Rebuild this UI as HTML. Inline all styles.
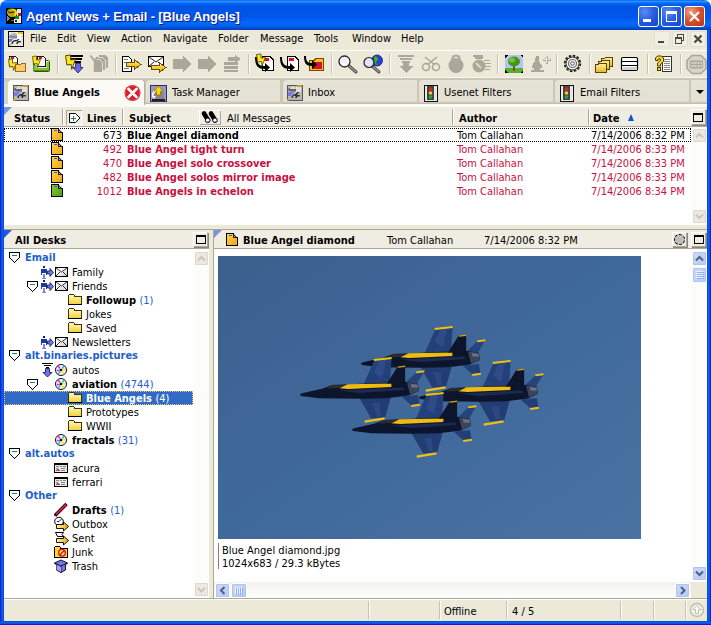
<!DOCTYPE html>
<html><head><meta charset="utf-8"><title>Agent News + Email - [Blue Angels]</title>
<style>
html,body{margin:0;padding:0;background:#fff}
body{width:711px;height:625px;position:relative;overflow:hidden;font:11px "DejaVu Sans Condensed","Liberation Sans",sans-serif;color:#000}
.a{position:absolute}
.t{position:absolute;white-space:pre;line-height:14px;height:14px}
.b{font-weight:bold}
#win{left:0;top:0;width:711px;height:625px;background:#ece9d8;border-radius:7px 7px 0 0;overflow:hidden}
#title{left:0;top:0;width:711px;height:30px;background:linear-gradient(to bottom,#0058ee 0%,#3593ff 4%,#288eff 6%,#127dff 8%,#036ffc 10%,#0262ee 14%,#0057e5 20%,#0054e3 24%,#0055eb 56%,#005bf5 66%,#026afe 76%,#0062ef 86%,#0052d6 92%,#0046c8 96%,#003cbc 100%)}
#title .tt{left:26px;top:9px;font:bold 13px "Liberation Sans",sans-serif;color:#fff;text-shadow:1px 1px 0 #0a1883;line-height:16px;height:16px;letter-spacing:-0.15px}
.bl{background:linear-gradient(to right,#0019cf 0,#0831d9 1px,#166aee 2px,#0855dd 3px,#0048d8 4px)}
.wb{top:6px;width:21px;height:21px;border-radius:3px;box-sizing:border-box;border:1px solid #fff;background:radial-gradient(circle at 30% 25%,#5b8df5 0,#2b5fe3 45%,#1843c4 100%)}
.wb.cl{background:radial-gradient(circle at 30% 25%,#f0a58b 0,#d8532f 45%,#b83212 100%)}
.hdr{background:#ece9d8}
.sep{width:1px;background:#aca899;box-shadow:1px 0 0 #fff}
.tab{top:80px;height:24px;width:134px;background:linear-gradient(to bottom,#e6e3d7 0,#e4e1d4 21px,#c9c5b4 23px,#b9b5a4 24px);border-radius:4px 0 0 0}
.tab.act{top:80px;height:25px;width:136px;background:#fbfaf4;border-radius:4px 3px 0 0;box-shadow:1px 0 0 #b5b1a0}
.red{color:#c8103e}
.blue{color:#2460c8}
.sb{background:#fcfcfa}
.sbtn{width:15px;height:15px;border-radius:2px;box-sizing:border-box;border:1px solid #fff;background:linear-gradient(135deg,#cbd9fb,#b7c9f5);box-shadow:0 0 0 1px #b3c3ee inset}
.sbtn.dis{background:#ece9e2;box-shadow:0 0 0 1px #dcd8cf inset}
.mx{width:10px;height:9px;box-sizing:border-box;border:1px solid #000;border-top-width:2px}
.rb{width:16px;height:15px;box-sizing:border-box;border:1px solid;border-color:#fff #aca899 #aca899 #fff;box-shadow:1px 1px 0 #8a887a;background:#efede2}
.tri{width:0;height:0;border-top:8px solid #7895e2;border-right:8px solid transparent}
.tri.on{border-top-color:#2456e0}
</style></head><body>
<div id="win" class="a">
<!-- title bar -->
<div id="title" class="a">
 <div class="t tt">Agent News + Email - [Blue Angels]</div>
</div>
<div class="a wb" style="left:638px"><div class="a" style="left:4px;top:12px;width:8px;height:3px;background:#fff"></div></div>
<div class="a wb" style="left:661px"><div class="a" style="left:4px;top:4px;width:11px;height:11px;box-sizing:border-box;border:1px solid #fff;border-top-width:3px"></div></div>
<div class="a wb cl" style="left:684px"><svg class="a" style="left:0;top:0" width="19" height="19"><path d="M5,5l9,9M14,5l-9,9" stroke="#fff" stroke-width="2.200"/></svg></div>

<!-- menu bar -->
<div class="a hdr" style="left:4px;top:30px;width:703px;height:20px"></div>
<div class="t" style="left:30px;top:32px">File</div>
<div class="t" style="left:57px;top:32px">Edit</div>
<div class="t" style="left:87px;top:32px">View</div>
<div class="t" style="left:121px;top:32px">Action</div>
<div class="t" style="left:163px;top:32px">Navigate</div>
<div class="t" style="left:218px;top:32px">Folder</div>
<div class="t" style="left:260px;top:32px">Message</div>
<div class="t" style="left:314px;top:32px">Tools</div>
<div class="t" style="left:352px;top:32px">Window</div>
<div class="t" style="left:401px;top:32px">Help</div>

<!-- toolbar -->
<div class="a" style="left:4px;top:50px;width:703px;height:28px;background:#ece9d8;border-top:1px solid #fff;box-sizing:border-box"></div>


<!-- tabs -->
<div class="a" style="left:4px;top:77px;width:703px;height:1px;background:#f8f7f0"></div>
<div class="a" style="left:4px;top:78px;width:703px;height:26px;background:#cbc7b7"></div>
<div class="a" style="left:4px;top:104px;width:703px;height:3px;background:#fbfaf4"></div>
<div class="a tab" style="left:146px"></div>
<div class="a tab" style="left:283px"></div>
<div class="a tab" style="left:419px"></div>
<div class="a tab" style="left:555px"></div>
<div class="a tab" style="left:691px;width:16px;border-radius:0"></div>
<div class="a" style="left:4px;top:81px;width:4px;height:23px;background:#d6d3c4"></div>
<div class="a tab act" style="left:8px"></div>
<div class="a" style="left:696px;top:90px;width:0;height:0;border-left:4px solid transparent;border-right:4px solid transparent;border-top:4px solid #000"></div>
<div class="t b" style="left:34px;top:86px">Blue Angels</div>
<div class="t" style="left:172px;top:86px">Task Manager</div>
<div class="t" style="left:308px;top:86px">Inbox</div>
<div class="t" style="left:444px;top:86px">Usenet Filters</div>
<div class="t" style="left:580px;top:86px">Email Filters</div>

<!-- list header -->
<div class="a" style="left:4px;top:107px;width:703px;height:20px;background:#efede2"></div>
<div class="a" style="left:4px;top:126px;width:703px;height:1px;background:#aca899"></div>
<div class="a tri" style="left:4px;top:107px"></div>
<div class="a sep" style="left:62px;top:109px;height:16px"></div>
<div class="a sep" style="left:122px;top:109px;height:16px"></div>
<div class="a sep" style="left:452px;top:109px;height:16px"></div>
<div class="a sep" style="left:588px;top:109px;height:16px"></div>
<div class="t b" style="left:14px;top:112px">Status</div>
<div class="t b" style="left:87px;top:112px">Lines</div>
<div class="t b" style="left:129px;top:112px">Subject</div>
<div class="t" style="left:227px;top:112px">All Messages</div>
<div class="t b" style="left:459px;top:112px">Author</div>
<div class="t b" style="left:593px;top:112px">Date</div>
<div class="a" style="left:628px;top:114px;width:0;height:0;border-left:3.5px solid transparent;border-right:3.5px solid transparent;border-bottom:7px solid #1650d8"></div>
<div class="a rb" style="left:691px;top:109px;width:15px;height:16px"></div><div class="a mx" style="left:693px;top:113px"></div>
<div class="a" style="left:4px;top:127px;width:703px;height:98px;background:#fff"></div>
<div class="a" style="left:4px;top:128px;width:687px;height:14px;box-sizing:border-box;border:1px dotted #000"></div>
<div class="a sb" style="left:691px;top:127px;width:16px;height:98px"></div>
<div class="a sbtn dis" style="left:692px;top:128px"></div>
<div class="a sbtn dis" style="left:692px;top:209px"></div>
<div class="t" style="left:92px;top:129px;width:30px;text-align:right">673</div>
<div class="t b" style="left:127px;top:129px">Blue Angel diamond</div>
<div class="t" style="left:457px;top:129px">Tom Callahan</div>
<div class="t" style="left:591px;top:129px">7/14/2006 8:32 PM</div>
<div class="t red" style="left:92px;top:143px;width:30px;text-align:right">492</div>
<div class="t b red" style="left:127px;top:143px">Blue Angel tight turn</div>
<div class="t red" style="left:457px;top:143px">Tom Callahan</div>
<div class="t red" style="left:591px;top:143px">7/14/2006 8:33 PM</div>
<div class="t red" style="left:92px;top:157px;width:30px;text-align:right">470</div>
<div class="t b red" style="left:127px;top:157px">Blue Angel solo crossover</div>
<div class="t red" style="left:457px;top:157px">Tom Callahan</div>
<div class="t red" style="left:591px;top:157px">7/14/2006 8:33 PM</div>
<div class="t red" style="left:92px;top:171px;width:30px;text-align:right">482</div>
<div class="t b red" style="left:127px;top:171px">Blue Angel solos mirror image</div>
<div class="t red" style="left:457px;top:171px">Tom Callahan</div>
<div class="t red" style="left:591px;top:171px">7/14/2006 8:33 PM</div>
<div class="t red" style="left:92px;top:185px;width:30px;text-align:right">1012</div>
<div class="t b red" style="left:127px;top:185px">Blue Angels in echelon</div>
<div class="t red" style="left:457px;top:185px">Tom Callahan</div>
<div class="t red" style="left:591px;top:185px">7/14/2006 8:34 PM</div>

<!-- lower panes -->
<div class="a" style="left:4px;top:225px;width:703px;height:4px;background:#ece9d8"></div>
<div class="a" style="left:4px;top:229px;width:703px;height:1px;background:#aca899"></div>
<div class="a" style="left:4px;top:230px;width:205px;height:19px;background:#efede2"></div>
<div class="a" style="left:4px;top:248px;width:205px;height:1px;background:#aca899"></div>
<div class="a tri on" style="left:4px;top:230px"></div>
<div class="t b" style="left:15px;top:234px">All Desks</div>
<div class="a rb" style="left:193px;top:232px;width:15px"></div><div class="a mx" style="left:196px;top:235px"></div>
<div class="a" style="left:4px;top:249px;width:205px;height:349px;background:#fff"></div>
<div class="a sb" style="left:193px;top:249px;width:16px;height:349px"></div>
<div class="a sbtn dis" style="left:194px;top:251px"></div>
<div class="a sbtn dis" style="left:194px;top:582px"></div>
<div class="t b blue" style="left:25px;top:251px">Email</div>
<div class="t" style="left:72px;top:266px">Family</div>
<div class="t" style="left:72px;top:280px">Friends</div>
<div class="t b" style="left:86px;top:294px">Followup <span class="blue" style="font-weight:normal">(1)</span></div>
<div class="t" style="left:86px;top:308px">Jokes</div>
<div class="t" style="left:86px;top:322px">Saved</div>
<div class="t" style="left:72px;top:336px">Newsletters</div>
<div class="t b blue" style="left:25px;top:349px">alt.binaries.pictures</div>
<div class="t" style="left:72px;top:364px">autos</div>
<div class="t b" style="left:72px;top:378px">aviation <span class="blue" style="font-weight:normal">(4744)</span></div>
<div class="a" style="left:4px;top:391px;width:189px;height:14px;background:#316ac5;box-sizing:border-box;border:1px dotted #e8c86a"></div>
<div class="t b" style="left:86px;top:392px;color:#fff">Blue Angels <span style="font-weight:normal">(4)</span></div>
<div class="t" style="left:86px;top:406px">Prototypes</div>
<div class="t" style="left:86px;top:420px">WWII</div>
<div class="t b" style="left:72px;top:434px">fractals <span class="blue" style="font-weight:normal">(31)</span></div>
<div class="t b blue" style="left:25px;top:447px">alt.autos</div>
<div class="t" style="left:72px;top:462px">acura</div>
<div class="t" style="left:72px;top:476px">ferrari</div>
<div class="t b blue" style="left:25px;top:489px">Other</div>
<div class="t b" style="left:72px;top:504px">Drafts <span class="blue" style="font-weight:normal">(1)</span></div>
<div class="t" style="left:72px;top:518px">Outbox</div>
<div class="t" style="left:72px;top:532px">Sent</div>
<div class="t" style="left:72px;top:546px">Junk</div>
<div class="t" style="left:72px;top:560px">Trash</div>

<div class="a" style="left:209px;top:230px;width:5px;height:368px;background:linear-gradient(to right,#ece9d8 0,#ece9d8 4px,#aca899 4px,#aca899 5px)"></div>
<div class="a" style="left:214px;top:230px;width:493px;height:19px;background:#efede2"></div>
<div class="a" style="left:214px;top:248px;width:493px;height:1px;background:#aca899"></div>
<div class="a tri" style="left:214px;top:230px"></div>
<div class="t b" style="left:243px;top:234px">Blue Angel diamond</div>
<div class="t" style="left:387px;top:234px">Tom Callahan</div>
<div class="t" style="left:484px;top:234px">7/14/2006 8:32 PM</div>
<div class="a rb" style="left:691px;top:232px;width:15px"></div><div class="a mx" style="left:694px;top:235px"></div>
<div class="a rb" style="left:672px;top:232px;width:15px"></div>
<div class="a" style="left:674px;top:234px;width:11px;height:11px;box-sizing:border-box;border:1px dashed #000;border-radius:6px;background:#bdbdbd"></div>
<div class="a" style="left:214px;top:249px;width:493px;height:349px;background:#fff"></div>
<!-- photo -->
<svg class="a" style="left:218px;top:256px" width="423" height="283" viewBox="218 256 423 283">
<defs>
<linearGradient id="sky" x1="0" y1="0" x2="1" y2="1"><stop offset="0" stop-color="#3b608e"/><stop offset="0.5" stop-color="#40699b"/><stop offset="1" stop-color="#4a73a3"/></linearGradient>
<g id="jet">
 <path d="M63.500,-10.500L74.500,-35L91.500,-36.500L90,-9z" fill="#244078"/>
 <path d="M74,-22L79,-34.500L86,-35.200L82,-16z" fill="#2e4b88"/>
 <path d="M73.500,-36L91.500,-38L91.700,-36L74,-34z" fill="#f0c010"/>
 <path d="M59.200,2.500L71.200,23.600L85.100,22.500L90.700,2.500z" fill="#223c74"/>
 <path d="M72,8L77,22L81,21L80,8z" fill="#2b4784"/>
 <path d="M64.500,25.500L84.500,22.300L84.700,24.600L64.800,27.700z" fill="#f0c010"/>
 <path d="M105.100,-12L117,-23.200L124.300,-23.800L116.100,-10z" fill="#27437c"/><path d="M116,-23.600L124.500,-24.800L124.300,-22.800L116.500,-21.800z" fill="#f0c010"/>
 <path d="M101.500,1.500L111.500,10.600L119.700,9.700L117.900,0z" fill="#243f78"/><path d="M111,10L119.800,8.800L120,10.800L111.500,12z" fill="#f0c010"/>
 <path d="M0,0L1,-1.500L22.900,-6.500L32,-9.900L44.800,-10.400L105,-13.200L118,-11.300L118.800,-4L108.800,0.500L86.800,3.300L61.200,3.800L19.200,3.200L1,1z" fill="#0c152c"/>
 <path d="M39.300,-6.800L47.500,-10.800L91.400,-11.400L91.400,-8L48.400,-5.900z" fill="#f0bc10"/>
 <path d="M26,-6.600L32,-9.900L41,-10.200L44.800,-9.800L39,-6.900z" fill="#2a2c30"/>
 <path d="M86.800,-11.300L97.800,-28.700L105.100,-29.300L105.100,-12.500z" fill="#0c152c"/>
 <path d="M97.400,-28.500L105.100,-29.500L105.100,-28L98,-27.200z" fill="#c8a010"/>
 <path d="M107,-12.500L118,-11.300L118.800,-4L110,-0.500z" fill="#3a455c"/>
 <path d="M111,-11L117.500,-10L118,-7.500L111.500,-7.500z" fill="#6a7488"/><path d="M39,-4.500L92,-7L104,-7.500L104,-5L60,-2z" fill="#1a2a52"/>
</g>
</defs>
<rect x="218" y="256" width="423" height="283" fill="url(#sky)"/>
<use href="#jet" x="361" y="364"/>
<use href="#jet" x="419" y="398"/>
<use href="#jet" x="300" y="395"/>
<use href="#jet" x="352" y="430"/>
</svg>
<div class="a" style="left:218px;top:543px;width:1px;height:26px;background:#808080"></div>
<div class="t" style="left:222px;top:544px;line-height:13px">Blue Angel diamond.jpg</div>
<div class="t" style="left:222px;top:557px;line-height:13px">1024x683 / 29.3 kBytes</div>
<!-- scrollbars -->
<div class="a sb" style="left:691px;top:249px;width:16px;height:333px"></div>
<div class="a sbtn" style="left:692px;top:251px"></div>
<div class="a sbtn" style="left:692px;top:267px;height:16px"></div>
<div class="a sbtn" style="left:692px;top:566px"></div>
<div class="a sb" style="left:214px;top:582px;width:477px;height:16px;background:linear-gradient(to bottom,#f3f1ec,#fefefb)"></div>
<div class="a sbtn" style="left:215px;top:583px"></div>
<div class="a sbtn" style="left:231px;top:583px;width:16px"></div>
<div class="a sbtn" style="left:675px;top:583px"></div>
<div class="a" style="left:691px;top:582px;width:16px;height:16px;background:#ece9d8"></div>

<div class="a" style="left:4px;top:598px;width:703px;height:23px;background:#ece9d8"></div>
<div class="a" style="left:4px;top:598px;width:703px;height:1px;background:#aca899"></div>
<div class="a" style="left:4px;top:599px;width:703px;height:1px;background:#fff"></div>
<div class="a sep" style="left:368px;top:601px;height:18px;background:#c5c2b2"></div>
<div class="a sep" style="left:439px;top:601px;height:18px;background:#c5c2b2"></div>
<div class="a sep" style="left:506px;top:601px;height:18px;background:#c5c2b2"></div>
<div class="a sep" style="left:620px;top:601px;height:18px;background:#c5c2b2"></div>
<div class="a sep" style="left:653px;top:601px;height:18px;background:#c5c2b2"></div>
<div class="a sep" style="left:685px;top:601px;height:18px;background:#c5c2b2"></div>
<div class="t" style="left:444px;top:605px">Offline</div>
<div class="t" style="left:512px;top:605px">4 / 5</div>

<svg class="a" style="left:0;top:0" width="711" height="625" viewBox="0 0 711 625" shape-rendering="crispEdges">
<defs>
<linearGradient id="gy" x1="0" y1="0" x2="0" y2="1"><stop offset="0" stop-color="#fff27a"/><stop offset="1" stop-color="#e9a800"/></linearGradient>
<linearGradient id="gf" x1="0" y1="0" x2="0" y2="1"><stop offset="0" stop-color="#fff3a0"/><stop offset="1" stop-color="#e8b830"/></linearGradient>
<symbol id="doc" viewBox="0 0 10 13" overflow="visible"><path d="M0.5,0.5h6l3,3v9h-9z" fill="#fff" stroke="#000"/><rect x="2" y="2" width="4" height="2" fill="#e01030"/></symbol>
<symbol id="bolt" viewBox="0 0 9 12" overflow="visible" preserveAspectRatio="none"><path d="M0.500,0.500L4.500,0L4.500,4L8.500,3.500L5.500,11.500L5,7.500L1.500,8z" fill="#ffe818" stroke="#5a4a00" stroke-width="0.800" shape-rendering="auto"/></symbol>
<symbol id="garrow" viewBox="0 0 18 16" overflow="visible"><path d="M0,3h10v-3l8,8l-8,8v-3h-10z" fill="#aca899"/></symbol>
</defs>
<!-- toolbar separators -->
<g fill="#c5c2b2"><rect x="57" y="54" width="1" height="20"/><rect x="115" y="54" width="1" height="20"/><rect x="248" y="54" width="1" height="20"/><rect x="331" y="54" width="1" height="20"/><rect x="389" y="54" width="1" height="20"/><rect x="497" y="54" width="1" height="20"/><rect x="556" y="54" width="1" height="20"/><rect x="589" y="54" width="1" height="20"/><rect x="647" y="54" width="1" height="20"/><rect x="680" y="54" width="1" height="20"/></g>
<g fill="#fff"><rect x="58" y="54" width="1" height="20"/><rect x="116" y="54" width="1" height="20"/><rect x="249" y="54" width="1" height="20"/><rect x="332" y="54" width="1" height="20"/><rect x="390" y="54" width="1" height="20"/><rect x="498" y="54" width="1" height="20"/><rect x="557" y="54" width="1" height="20"/><rect x="590" y="54" width="1" height="20"/><rect x="648" y="54" width="1" height="20"/><rect x="681" y="54" width="1" height="20"/></g>
<!-- 1 doc+bolt+folder -->
<use href="#doc" x="9" y="55" width="9" height="13"/>
<path d="M15.500,71.500v-7h5l1,-1.500h3.500v8.500z" fill="#f8cc68" stroke="#9a6a18"/>
<use href="#bolt" x="8" y="59" width="9" height="12"/>
<!-- 2 doc+bolt+green -->
<rect x="33" y="60" width="17" height="12" rx="2.500" fill="#2a5a08" shape-rendering="auto"/>
<rect x="35" y="61" width="14" height="9" rx="1" fill="#ece9d8"/>
<use href="#doc" x="37" y="55" width="9" height="13"/>
<path d="M33.500,65h3v3h10v-6h2.500v8.500h-15.500z" fill="#86c03a" shape-rendering="auto"/>
<use href="#bolt" x="32" y="56" width="9" height="12"/>
<!-- 3 funnel lines + bolt + blue arrow -->
<g fill="#000"><rect x="66" y="55" width="17" height="2"/><rect x="70" y="58" width="12" height="2"/><rect x="73" y="61" width="8" height="1.500"/></g>
<path d="M75.500,63.500h5v4h2.500l-5,5.500l-5,-5.500h2.500z" fill="#6a6ae0" stroke="#1a1a6a" stroke-width="0.800" shape-rendering="auto"/>
<use href="#bolt" x="65" y="55" width="11" height="15"/>
<!-- 4 gray docs -->
<g fill="#aca899"><path d="M99,55h6l3,3v10h-9z"/><path d="M96,57h6l3,3v10h-9z" stroke="#ece9d8" stroke-width="0.800"/><path d="M93,59h6l3,3v10h-9z" stroke="#ece9d8" stroke-width="0.800"/><path d="M90.500,55.500l4,5.500l3,-4" fill="none" stroke="#aca899" stroke-width="1.800" shape-rendering="auto"/></g>
<!-- 5 doc + yellow arrow -->
<path d="M122.500,56.500h6l3,3v11.500h-9z" fill="#fff" stroke="#000"/>
<g fill="#777"><rect x="124" y="59" width="4" height="1"/><rect x="124" y="62" width="5" height="1"/><rect x="124" y="68" width="5" height="1"/></g>
<path d="M126.500,62.500h8v-2.500l6.500,4.500l-6.500,4.500v-2.500h-8z" fill="url(#gy)" stroke="#6b4a00"/>
<!-- 6 envelope + arrow -->
<rect x="148.500" y="56.500" width="15" height="10" fill="#fff" stroke="#000"/>
<path d="M149,57l7,5l7,-5M149,66l5,-4M163,66l-5,-4" fill="none" stroke="#000" shape-rendering="auto" stroke-width="0.9"/>
<path d="M151.500,65.500h8v-2.500l6.500,4.500l-6.500,4.500v-2.500h-8z" fill="url(#gy)" stroke="#6b4a00"/>
<!-- 7,8 gray arrows -->
<use href="#garrow" x="173" y="56" width="18" height="16"/>
<use href="#garrow" x="198" y="56" width="18" height="16"/>
<!-- 9 gray stack + arrow -->
<g fill="#aca899"><rect x="224" y="62" width="14" height="3"/><rect x="224" y="66" width="14" height="3"/><rect x="224" y="70" width="14" height="2"/><path d="M228,57h7v-2l6,4l-6,4v-2h-7z"/></g>
<!-- 10 doc + bolt + curved arrow -->
<use href="#doc" x="262" y="55" width="12" height="17"/>
<path d="M257,60c0,8 3,9 8,9v-3l5,4.500l-5,4.500v-3c-7,0 -10,-3 -10,-12z" fill="#000" shape-rendering="auto" transform="translate(0,-3)"/>
<use href="#bolt" x="256" y="54" width="10" height="12"/>
<!-- 11 doc + curved arrow -->
<use href="#doc" x="287" y="55" width="12" height="17"/>
<path d="M282,60c0,8 3,9 8,9v-3l5,4.500l-5,4.500v-3c-7,0 -10,-3 -10,-12z" fill="#000" shape-rendering="auto" transform="translate(0,-3)"/>
<!-- 12 folder + arrow -->
<path d="M309.500,60.500h5l1,-2h8v12h-14z" fill="#f6c21c" stroke="#6b4a00"/>
<rect x="312" y="62" width="10" height="7" fill="#d8102c"/>
<path d="M306,58c0,6 2,7 6,7v-3l5,4.500l-5,4.500v-3c-6,0 -8,-3 -8,-10z" fill="#000" shape-rendering="auto" transform="translate(0,-2)"/>
<!-- 13 magnifier -->
<g shape-rendering="auto"><path d="M348,65l8,7" stroke="#555" stroke-width="3" stroke-linecap="round"/><path d="M348,65l8,7" stroke="#bbb" stroke-width="1"/><circle cx="344.500" cy="61.500" r="5.500" fill="#fff" stroke="#222" stroke-width="1.300"/><circle cx="343.500" cy="60.500" r="3" fill="#eef"/>
<!-- 14 magnifier + globe -->
<circle cx="377" cy="60.500" r="5.500" fill="#2b3fd8" stroke="#101a70" stroke-width="0.800"/><path d="M375,56c3,1 4,3 2,5c-2,2 0,3 1,4c-2,0 -4,-2 -4,-4c0,-2 0,-3 1,-5z" fill="#38b020"/>
<path d="M372,66l7,6" stroke="#555" stroke-width="3" stroke-linecap="round"/><path d="M372,66l7,6" stroke="#bbb" stroke-width="1"/><circle cx="369" cy="62.500" r="5" fill="#dfe4ff" fill-opacity="0.900" stroke="#222" stroke-width="1.200"/></g>
<!-- 15 gray download -->
<g fill="#aca899"><rect x="398" y="55" width="16" height="2"/><rect x="400" y="58" width="12" height="2"/><rect x="402" y="61" width="8" height="2"/><path d="M403,63h6v3h4l-7,7l-7,-7h4z"/></g>
<!-- 16 gray binocs -->
<g fill="none" stroke="#aca899" stroke-width="1.600" shape-rendering="auto"><circle cx="426" cy="67" r="3.500"/><circle cx="436" cy="67" r="3.500"/><path d="M425,57l10,8M437,57l-10,8"/></g>
<!-- 17 gray lock -->
<g shape-rendering="auto"><circle cx="456" cy="65.500" r="7.500" fill="#aca899"/><path d="M452.500,60v-2c0,-3 7,-3 7,0v2" fill="none" stroke="#aca899" stroke-width="2.200"/>
<!-- 18 gray stopwatch -->
<circle cx="479" cy="66" r="6.500" fill="#aca899"/><rect x="473" y="55" width="10" height="2" fill="#aca899"/><rect x="475" y="57" width="8" height="2" fill="#aca899"/><path d="M476,63l5,5" stroke="#ece9d8" stroke-width="1.500"/><g fill="#aca899"><rect x="484" y="60" width="6" height="1"/><rect x="485" y="63" width="6" height="1"/><rect x="485" y="66" width="6" height="1"/><rect x="485" y="69" width="5" height="1"/></g></g>
<!-- 19 tree -->
<rect x="505" y="55" width="18" height="18" fill="#b9c3f3"/>
<rect x="505" y="68" width="18" height="5" fill="#58b030"/>
<g fill="#000"><path d="M505,55h3l-3,3zM523,55h-3l3,3zM505,73h3l-3,-3zM523,73h-3l3,-3z"/></g>
<rect x="513" y="65" width="2" height="6" fill="#8a4a10"/>
<ellipse cx="514" cy="61.500" rx="6" ry="5" fill="#3f9a18" shape-rendering="auto"/><ellipse cx="512" cy="60" rx="3" ry="2.500" fill="#7cc038" shape-rendering="auto"/>
<!-- 20 gray person + -->
<g fill="#aca899"><path d="M536,56h3v5l3,5v2h-2v4h-6v-4h-2v-2l3,-5z"/><rect x="531" y="70" width="13" height="2"/><path d="M542,58h3v-3h3v3h3v3h-3v3h-3v-3h-3z" stroke="#ece9d8" stroke-width="0.800"/><path d="M543,59h3v-3h1v3h3v1h-3v3h-1v-3h-3z" fill="#ece9d8"/></g>
<!-- 21 gear -->
<g shape-rendering="auto"><circle cx="572.500" cy="63.500" r="7.800" fill="none" stroke="#222" stroke-width="1.800" stroke-dasharray="2.600 1.480"/><circle cx="572.500" cy="63.500" r="6.500" fill="#f4f4f4" stroke="#222" stroke-width="1"/><circle cx="572.500" cy="63.500" r="4" fill="#fff" stroke="#666" stroke-width="1.200"/><circle cx="572.500" cy="63.500" r="1.800" fill="#fff" stroke="#444" stroke-width="1"/></g>
<!-- 22 folders -->
<path d="M601.500,58.500h3l1,-1.500h7v9h-11z" fill="url(#gf)" stroke="#5a4200"/>
<path d="M598.500,61.500h3l1,-1.500h7v9h-11z" fill="url(#gf)" stroke="#5a4200"/>
<path d="M595.500,64.500h3l1,-1.500h7v9h-11z" fill="url(#gf)" stroke="#5a4200"/>
<!-- 23 list -->
<rect x="621.500" y="57.500" width="16" height="13" rx="1.500" fill="#fff" stroke="#000" stroke-width="1.200" shape-rendering="auto"/>
<rect x="621" y="61" width="17" height="1" fill="#000"/><rect x="621" y="65" width="17" height="1" fill="#000"/><rect x="622.500" y="66.500" width="14" height="3.500" fill="#d0d0d0"/>
<!-- 24 help -->
<rect x="662.500" y="56.500" width="9" height="15" fill="#fff" stroke="#333"/>
<g fill="#888"><rect x="664" y="59" width="6" height="1"/><rect x="664" y="61" width="6" height="1"/><rect x="664" y="63" width="6" height="1"/><rect x="664" y="65" width="6" height="1"/><rect x="664" y="67" width="6" height="1"/><rect x="664" y="69" width="6" height="1"/></g>
<path d="M655.500,60.500v-2.500l2,-2h4l2,2v3.500l-3,2.500v2h-3v-3l3,-2.500v-1.500h-2.500v1.500z" fill="#ffd820" stroke="#4a3a00" shape-rendering="auto"/><rect x="657.500" y="67.500" width="3" height="3" fill="#ffd820" stroke="#4a3a00"/>
<!-- 25 gray stop -->
<g shape-rendering="auto"><path d="M692,55.500h9l5,5v8l-5,5h-9l-5,-5v-8z" fill="#d8d5c6" stroke="#aca899" stroke-width="1.600"/><rect x="690" y="60.500" width="13" height="8" rx="1" fill="#aca899"/><g fill="#d8d5c6"><rect x="691.500" y="62" width="2" height="2"/><rect x="694.500" y="62" width="2" height="2"/><rect x="697.500" y="62" width="2" height="2"/><rect x="700.500" y="62" width="1.500" height="2"/><rect x="691.500" y="65" width="2" height="2"/><rect x="694.500" y="65" width="2" height="2"/><rect x="697.500" y="65" width="2" height="2"/><rect x="700.500" y="65" width="1.500" height="2"/></g></g>
<defs>
<linearGradient id="gfo" x1="0" y1="0" x2="0" y2="1"><stop offset="0" stop-color="#fffbc0"/><stop offset="1" stop-color="#f2cf38"/></linearGradient>
<linearGradient id="gdy" x1="0" y1="0" x2="1" y2="1"><stop offset="0" stop-color="#ffd840"/><stop offset="1" stop-color="#f0a020"/></linearGradient>
<linearGradient id="gdg" x1="0" y1="0" x2="1" y2="1"><stop offset="0" stop-color="#8cd030"/><stop offset="1" stop-color="#4c9a10"/></linearGradient>
<linearGradient id="gen" x1="0" y1="0" x2="1" y2="1"><stop offset="0.3" stop-color="#fff"/><stop offset="1" stop-color="#c8c8c8"/></linearGradient>
<linearGradient id="gya" x1="0" y1="0" x2="1" y2="0"><stop offset="0" stop-color="#fff0b0"/><stop offset="1" stop-color="#f0a800"/></linearGradient>
<g id="shield"><path d="M0.500,0.500h10v5l-5,5l-5,-5z" fill="#fff" stroke="#000"/><rect x="3" y="3" width="5" height="1" fill="#108878"/></g>
<g id="person"><rect x="2" y="0" width="2" height="2" fill="#10207a"/><path d="M0,3h6v6h-1v-2h-4v2h-1z" fill="#1a3aa0"/><rect x="2" y="8" width="2" height="5" fill="#8080f8"/><rect x="1" y="12" width="4" height="1" fill="#8080f8"/><path d="M6.500,5h2.500v-2.500l3.500,4l-3.500,4v-2.500h-2.500z" fill="#6878e8" stroke="#101030" stroke-width="0.800" shape-rendering="auto"/></g>
<g id="env"><rect x="0.500" y="0.500" width="12" height="9" fill="url(#gen)" stroke="#000"/><rect x="0" y="9" width="13" height="1" fill="#000"/><path d="M1,1l5.500,4l5.500,-4M1,9l4,-4M12,9l-4,-4" fill="none" stroke="#000" stroke-width="0.800" shape-rendering="auto"/></g>
<g id="fold"><path d="M0.500,10.500v-9l1,-1h4l1.500,2h6.500v8z" fill="url(#gfo)" stroke="#3c3400"/><rect x="0" y="10" width="14" height="1" fill="#000"/></g>
<g id="cd" shape-rendering="auto"><circle cx="0" cy="0" r="5.500" fill="#f4f4f4" stroke="#111" stroke-width="1"/><path d="M-3,-4l2,2.500M-4.200,0.500l3,0" stroke="#e020e0" stroke-width="1.500"/><path d="M3,4l-2,-2.500M4.200,-0.500l-3,0" stroke="#e8e810" stroke-width="1.500"/><path d="M-2.500,3.800l1.500,-2.300M3,-3.800l-1.800,2.300" stroke="#10c0e8" stroke-width="1.500"/><circle cx="0" cy="0" r="1.200" fill="#000"/></g>
<g id="sdoc"><path d="M0.500,0.500h7l4,4v8h-11z" stroke="#000"/><rect x="0" y="12" width="12" height="1" fill="#000"/><path d="M7.500,0.500v4h4z" fill="#b8a8e8" stroke="#000" stroke-width="0.800"/><rect x="3" y="2" width="3" height="1" fill="#5050e8"/></g>
<g id="news"><rect x="0.500" y="0.500" width="13" height="9" fill="#e8e8e8" stroke="#000"/><rect x="0" y="0" width="14" height="1.500" fill="#000"/><rect x="0" y="9" width="14" height="1" fill="#000"/><g fill="#888"><rect x="2" y="3" width="3" height="1"/><rect x="6" y="3" width="2" height="1"/><rect x="9" y="3" width="3" height="1"/><rect x="2" y="5" width="2" height="1"/><rect x="7" y="5" width="4" height="1"/><rect x="7" y="7" width="4" height="1"/></g><rect x="2" y="7" width="4" height="1" fill="#e03060"/><rect x="3" y="6" width="2" height="1" fill="#e03060"/></g>
<g id="yarr"><path d="M0.500,2.500h7v-2.500l5,4.500l-5,4.500v-2.500h-7z" fill="url(#gya)" stroke="#000" stroke-width="0.900" shape-rendering="auto"/></g>
</defs>
<use href="#shield" x="9" y="252"/>
<use href="#shield" x="27" y="281"/>
<use href="#shield" x="9" y="350"/>
<use href="#shield" x="27" y="379"/>
<use href="#shield" x="9" y="448"/>
<use href="#shield" x="9" y="490"/>
<use href="#person" x="41" y="266"/>
<use href="#env" x="55" y="267"/>
<use href="#person" x="41" y="280"/>
<use href="#env" x="55" y="281"/>
<use href="#person" x="41" y="336"/>
<use href="#env" x="55" y="337"/>
<use href="#fold" x="68" y="294"/>
<use href="#fold" x="68" y="308"/>
<use href="#fold" x="68" y="322"/>
<use href="#fold" x="68" y="392"/>
<use href="#fold" x="68" y="406"/>
<use href="#fold" x="68" y="420"/>
<use href="#cd" x="61" y="370"/>
<use href="#cd" x="61" y="384"/>
<use href="#cd" x="61" y="440"/>
<use href="#news" x="54" y="463"/>
<use href="#news" x="54" y="477"/>
<g fill="#000"><rect x="42" y="363" width="11" height="1"/><rect x="44" y="365" width="7" height="1"/><rect x="46" y="367" width="3" height="1"/></g><path d="M45.500,368.5h4v4h2.500l-4.500,4.500l-4.500,-4.500h2.500z" fill="#7070e8" stroke="#18184a" stroke-width="0.900" shape-rendering="auto"/>
<g shape-rendering="auto"><path d="M55,515.5l11.500,-11.500" stroke="#000" stroke-width="3.400" stroke-linecap="butt"/><path d="M56,514.5l10,-10" stroke="#e81848" stroke-width="1.800" stroke-linecap="butt"/><path d="M54.300,516.2l1.800,-0.600l-1.200,-1.200z" fill="#000"/></g>
<g shape-rendering="auto"><circle cx="59" cy="521.5" r="4.300" fill="#fff" stroke="#000"/><path d="M59,521.5l2.500,-2.500M59,521.5h-2" stroke="#000" stroke-width="0.900"/></g><use href="#yarr" x="56" y="522"/>
<path d="M55.500,532.5h8l-1.500,2l1.500,2h-6z" fill="#fff" stroke="#000" shape-rendering="auto"/><use href="#yarr" x="56" y="536"/>
<path d="M54.500,557.5v-10l1,-1h4l1.500,2h6.500v9z" fill="#ffd820" stroke="#000"/><rect x="54" y="557" width="14" height="1" fill="#000"/><g shape-rendering="auto"><circle cx="62" cy="552.7" r="3.300" fill="#ffe860" stroke="#e01020" stroke-width="1.400"/><path d="M59.800,555l4.500,-4.500" stroke="#e01020" stroke-width="1.400"/></g>
<g shape-rendering="auto"><path d="M54.500,563l6.500,-3l6.500,3l-2,2v5l-4.500,2.500l-4.500,-2.500v-5z" fill="#7878d8" stroke="#101040" stroke-width="1"/><path d="M54.500,563l6.500,3l6.500,-3M61,566v6.500" fill="none" stroke="#101040" stroke-width="1"/><path d="M56.500,565l4.500,2v5l-4.500,-2.500z" fill="#a0a0f0"/></g>
<use href="#sdoc" x="51" y="128" fill="url(#gdy)"/>
<use href="#sdoc" x="51" y="142" fill="url(#gdy)"/>
<use href="#sdoc" x="51" y="156" fill="url(#gdy)"/>
<use href="#sdoc" x="51" y="170" fill="url(#gdy)"/>
<use href="#sdoc" x="51" y="184" fill="url(#gdg)"/>
<use href="#sdoc" x="226" y="233" fill="url(#gdy)"/>
<rect x="66.500" y="110.500" width="15" height="14" fill="#efede2" stroke="#fff"/><path d="M66.500,124.500v-14h15" fill="none" stroke="#aca899"/><path d="M69.500,113.500h6l4.500,4.500l-4.500,4.500h-6z" fill="#fff" stroke="#000" shape-rendering="auto"/><path d="M71,118h5M73.500,115.500v5" stroke="#108868" stroke-width="1"/>
<rect x="199.500" y="110.500" width="21" height="14" fill="#efede2" stroke="#aca899"/><path d="M199.500,124.500v-14h21" fill="none" stroke="#fff"/><g shape-rendering="auto"><path d="M204,113.500l4,6.500M211,113.500l4,6.500" stroke="#000" stroke-width="4.600" stroke-linecap="round"/><circle cx="207.700" cy="120.300" r="2.300" fill="#fff" stroke="#000" stroke-width="1"/><circle cx="215" cy="120.300" r="2.300" fill="#fff" stroke="#000" stroke-width="1"/><path d="M208.500,121.500a1.500,1.500 0 0 1 -2,0M215.800,121.500a1.500,1.500 0 0 1 -2,0" stroke="#6060e0" stroke-width="1" fill="none"/></g>
<!-- title icon -->
<rect x="6" y="8" width="16" height="16" fill="#000"/>
<g shape-rendering="auto"><path d="M7,12c0,-2 2,-3.500 5,-3.500s5,1 5,3.500c0,3 -2,5 -5,5s-5,-2 -5,-5z" fill="#b8a818"/><path d="M12,9c3,0 5,1.500 5,4c0,2 -1,3 -3,3.500c1,-2 0,-5 -2,-7.500z" fill="#f8d810"/><path d="M8,11.500c1,1.500 5,1.500 6.500,0" stroke="#30300a" stroke-width="1.300" fill="none"/></g>
<rect x="17" y="9" width="4" height="14" fill="#e8e8e8"/><rect x="14" y="19" width="7" height="4" fill="#f0f0f0"/>
<rect x="18" y="13" width="3" height="3" fill="#c01818"/><rect x="15" y="16" width="4" height="3" fill="#208a20"/><path d="M7,16l3,2.500l-3,2.500z" fill="#888"/><rect x="15" y="20" width="2" height="2" fill="#222"/><rect x="11" y="20" width="3" height="1" fill="#208a20"/>
<!-- menu icon -->
<rect x="8" y="31" width="16" height="16" fill="#000"/>
<rect x="9" y="32" width="14" height="14" fill="#e8e8e8"/>
<g shape-rendering="auto"><ellipse cx="14" cy="36.500" rx="5" ry="2" fill="#888"/><path d="M11,36c0,-4 6,-4 6,0z" fill="#b0b0b0"/><path d="M9,39l4,0l-2,3l-2,0z" fill="#7070f0"/><path d="M12,44c0,-3 3,-4 5,-3M17,44c0,-2 2,-3 4,-2" stroke="#111" stroke-width="1.300" fill="none"/><path d="M21,36l-4,5" stroke="#111" stroke-width="1.200"/></g>
<rect x="18" y="32" width="5" height="2" fill="#f0c010"/><rect x="9" y="44" width="2" height="2" fill="#c8b810"/><rect x="17" y="34" width="4" height="5" fill="#fff"/>
<!-- tab icons -->
<g id="ticon"><rect x="13" y="85" width="16" height="16" fill="#555"/><rect x="14" y="86" width="14" height="14" fill="#b8b8b8"/>
<g shape-rendering="auto"><ellipse cx="19" cy="89.500" rx="5" ry="2" fill="#666"/><path d="M16,89c0,-3.500 6,-3.500 6,0z" fill="#ddd"/><path d="M14,92h6l-3,4l-3,0z" fill="#7878f0"/><path d="M18,98c0,-3 3,-4 5,-3M22,98c0,-2 2,-3 4,-2" stroke="#222" stroke-width="1.300" fill="none"/><path d="M26,90l-5,6" stroke="#222" stroke-width="1.200"/></g>
<rect x="22" y="86" width="5" height="6" fill="#e0e0e0"/><rect x="23" y="85" width="5" height="1.500" fill="#c8a010"/><rect x="13" y="99" width="2" height="2" fill="#c8a010"/></g>
<use href="#ticon" x="274" y="0"/>
<!-- task manager icon -->
<rect x="150" y="85" width="16" height="16" fill="#9898c8" stroke="#303050" stroke-width="1"/>
<rect x="153" y="92" width="11" height="7" fill="#888" /><rect x="152" y="99" width="13" height="1.500" fill="#202030"/>
<g shape-rendering="auto"><path d="M153,97c-1,-4 1,-6 4,-6" stroke="#fff" stroke-width="1.800" fill="none"/><path d="M152,96l2,3l2,-3z" fill="#fff"/><path d="M158.500,86l4.500,5h-2.500v4h-4v-4h-2.500z" fill="#ffd800" stroke="#806000" stroke-width="0.600"/></g>
<!-- filter icons (traffic light) -->
<g id="tl"><rect x="424" y="85" width="13" height="16" fill="#e8e8e8" stroke="#111" stroke-width="1"/><rect x="427" y="86" width="7" height="14" fill="#444"/><g shape-rendering="auto"><circle cx="430.500" cy="89" r="1.800" fill="#e82020"/><circle cx="430.500" cy="93" r="1.800" fill="#f0d020"/><circle cx="430.500" cy="97" r="1.800" fill="#20b030"/></g></g>
<use href="#tl" x="136" y="0"/>
<!-- tab close -->
<g shape-rendering="auto"><circle cx="132.500" cy="93" r="8" fill="#d81c28"/><circle cx="132.500" cy="93" r="7.200" fill="none" stroke="#f06a6a" stroke-width="1" stroke-opacity="0.600"/><path d="M128.500,89l8,8M136.500,89l-8,8" stroke="#fff" stroke-width="2.600" stroke-linecap="round"/></g>
<!-- mdi buttons -->
<g fill="#f1efe4" stroke="#e2dfd0" stroke-width="1"><rect x="654.500" y="31.500" width="15" height="15" rx="1.500"/><rect x="672.500" y="31.500" width="15" height="15" rx="1.500"/><rect x="690.500" y="31.500" width="15" height="15" rx="1.500"/></g>
<rect x="658" y="41" width="6" height="2" fill="#4a483c"/>
<path d="M677.500,37v-2.500h6v5.500h-1.500" fill="none" stroke="#4a483c" stroke-width="1"/><rect x="677" y="34" width="7" height="1" fill="#4a483c"/>
<rect x="675.500" y="38" width="6" height="5" fill="none" stroke="#4a483c" stroke-width="1"/><rect x="675" y="37" width="7" height="2" fill="#4a483c"/>
<path d="M694.500,35.500l7,7M701.500,35.500l-7,7" stroke="#4a483c" stroke-width="2.200" shape-rendering="auto"/>
<!-- scroll arrows -->
<g fill="none" stroke-width="2" shape-rendering="auto" stroke-linejoin="miter">
<path d="M696,137.500l3.500,-3.500l3.500,3.500" stroke="#c9c7ba"/><path d="M696,214.500l3.500,3.500l3.500,-3.500" stroke="#c9c7ba"/>
<path d="M198,260.500l3.500,-3.500l3.500,3.500" stroke="#c9c7ba"/><path d="M198,588l3.500,3.500l3.500,-3.500" stroke="#c9c7ba"/>
<path d="M696,260.500l3.500,-3.500l3.500,3.500" stroke="#4d6185"/><path d="M696,571.500l3.500,3.500l3.500,-3.500" stroke="#4d6185"/>
<path d="M224.500,587l-3.500,3.500l3.500,3.500" stroke="#4d6185"/><path d="M681,587l3.500,3.500l-3.500,3.500" stroke="#4d6185"/>
</g>
<g fill="#eef4fe"><rect x="696" y="271" width="7" height="1"/><rect x="696" y="273" width="7" height="1"/><rect x="696" y="275" width="7" height="1"/><rect x="696" y="277" width="7" height="1"/><rect x="235" y="587" width="1" height="7"/><rect x="237" y="587" width="1" height="7"/><rect x="239" y="587" width="1" height="7"/><rect x="241" y="587" width="1" height="7"/></g>
<g fill="#8cb0f8"><rect x="697" y="272" width="7" height="1"/><rect x="697" y="274" width="7" height="1"/><rect x="697" y="276" width="7" height="1"/><rect x="697" y="278" width="7" height="1"/><rect x="236" y="588" width="1" height="7"/><rect x="238" y="588" width="1" height="7"/><rect x="240" y="588" width="1" height="7"/><rect x="242" y="588" width="1" height="7"/></g>
<!-- status icon -->
<g shape-rendering="auto"><circle cx="697" cy="610" r="6.500" fill="#f4f2e8" stroke="#c0bcae" stroke-width="1.400"/><path d="M697,605.500l4,4h-2.500v4h-3v-4h-2.500z" fill="#fff" stroke="#b8b4a4" stroke-width="0.900"/></g>
<!-- MOREICONS4 -->
</svg>
<!-- window borders -->
<div class="a bl" style="left:0;top:30px;width:4px;height:595px"></div>
<div class="a bl" style="left:707px;top:30px;width:4px;height:595px;transform:scaleX(-1)"></div>
<div class="a" style="left:0;top:621px;width:711px;height:4px;background:linear-gradient(to bottom,#0048d8 0,#0855dd 1px,#166aee 2px,#0831d9 3px,#0019cf 4px)"></div>
</div>
</body></html>
